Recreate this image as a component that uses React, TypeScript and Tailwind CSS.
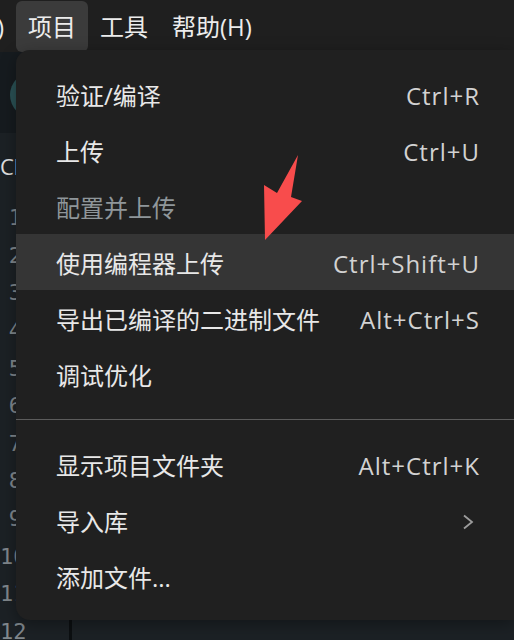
import React from 'react';

type Item = {
  label: string;
  shortcut?: string;
  disabled?: boolean;
  active?: boolean;
  submenu?: boolean;
};

const topItems: Item[] = [
  { label: '验证/编译', shortcut: 'Ctrl+R' },
  { label: '上传', shortcut: 'Ctrl+U' },
  { label: '配置并上传', disabled: true },
  { label: '使用编程器上传', shortcut: 'Ctrl+Shift+U', active: true },
  { label: '导出已编译的二进制文件', shortcut: 'Alt+Ctrl+S' },
  { label: '调试优化' },
];

const bottomItems: Item[] = [
  { label: '显示项目文件夹', shortcut: 'Alt+Ctrl+K' },
  { label: '导入库', submenu: true },
  { label: '添加文件...' },
];

const MenuRow = ({ item, nudge }: { item: Item; nudge?: boolean }) => (
  <div
    className={`flex h-[56px] items-center justify-between pl-[40px] pr-[34px] ${
      item.active ? 'bg-[#353535]' : ''
    } ${nudge ? 'pt-[3px]' : ''}`}
  >
    <span className={item.disabled ? 'text-[#8f969a]' : 'text-[#e8e8e8]'}>{item.label}</span>
    {item.shortcut && <span className="tracking-[1px] text-[#d2d2d2]">{item.shortcut}</span>}
    {item.submenu && (
      <svg width="12" height="16" viewBox="0 0 12 16" className="mr-[6px]">
        <polyline points="2,1.5 10,8 2,14.5" fill="none" stroke="#9c9c9c" strokeWidth="1.8" />
      </svg>
    )}
  </div>
);

export default function App() {
  const lines = Array.from({ length: 12 }, (_, i) => i + 1);

  return (
    <div
      className="relative h-[640px] w-[514px] overflow-hidden bg-[#1c2125] text-[24px]"
      style={{ fontFamily: '"Open Sans", "Noto Sans CJK SC", sans-serif' }}
    >
      {/* menu bar */}
      <div className="flex h-[52px] items-stretch bg-[#1f1f1f] pt-px text-[#ececec]">
        <div className="flex w-[16px] items-center justify-end whitespace-nowrap pr-[12px]">编辑(E)</div>
        <div className="flex items-center rounded-[6px] bg-[#3b3b3b] px-[12px]">项目</div>
        <div className="flex items-center px-[12px]">工具</div>
        <div className="flex items-center px-[12px]">帮助(H)</div>
      </div>

      {/* editor behind the menu */}
      <div className="flex h-[81px] items-center bg-[#161b1f] pl-[10px] pt-[5px]">
        <div className="h-[46px] w-[46px] rounded-full bg-[#2b5256]" />
      </div>
      <div className="flex h-[66px] items-center text-[22px] text-[#e0e0e0]">Ch</div>
      <div style={{ fontFamily: '"DejaVu Sans Mono", monospace' }} className="text-[22px] text-[#80878c]">
        {lines.map((n) => (
          <div key={n} className="flex h-[37.6px] items-center">
            <span className="w-[22px] shrink-0 whitespace-nowrap text-right">{n}</span>
            {n === 12 && <span className="ml-[47px] h-full w-[3px] bg-[#0c0f11]" />}
          </div>
        ))}
      </div>

      {/* dropdown */}
      <div className="absolute left-[16px] right-0 top-[50px] h-[570px] rounded-l-[14px] bg-[#202020] pt-[16px] shadow-[0_4px_16px_rgba(0,0,0,0.35)]">
        {topItems.map((it) => (
          <MenuRow key={it.label} item={it} nudge />
        ))}
        <div className="pb-[18px] pt-[17px]">
          <div className="h-px bg-[#5c5c5c]" />
        </div>
        {bottomItems.map((it) => (
          <MenuRow key={it.label} item={it} />
        ))}
      </div>

      {/* annotation arrow */}
      <svg className="absolute left-0 top-0" width="514" height="640" viewBox="0 0 514 640">
        <polygon points="298,155 291,197 302,201 265,240 264,185 277,193" fill="#f84c4c" />
      </svg>
    </div>
  );
}
